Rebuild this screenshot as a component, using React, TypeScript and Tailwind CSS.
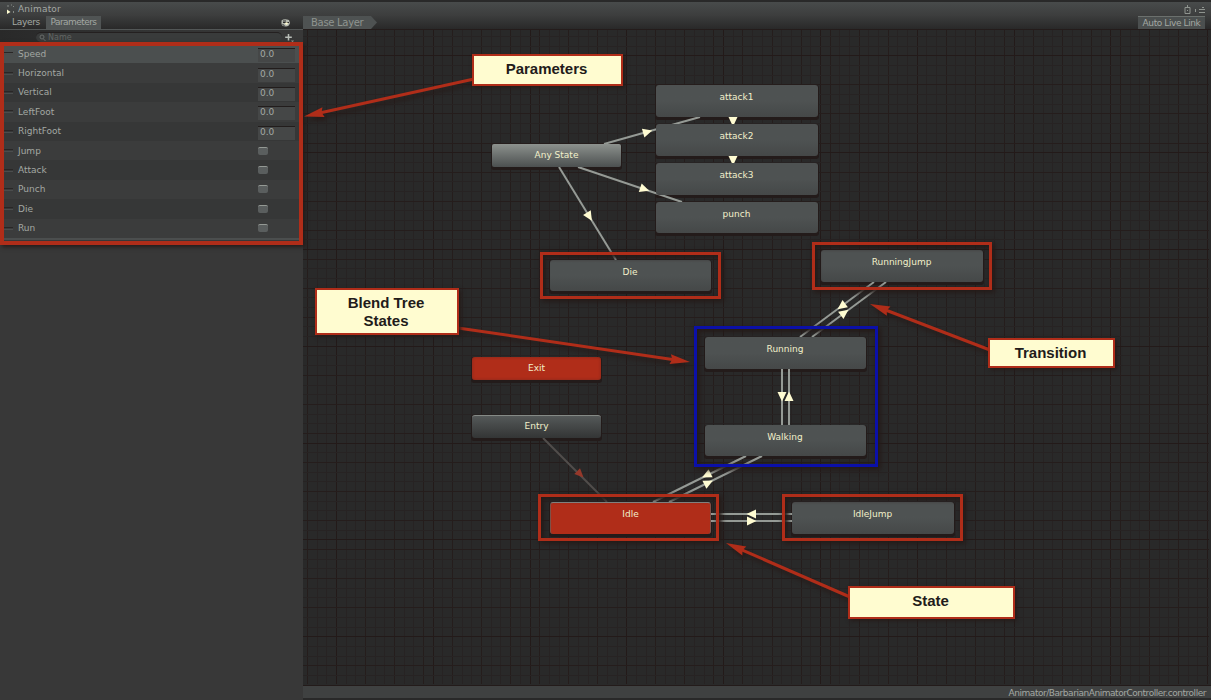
import React from "react";

type NodeKind = "state" | "any" | "exit" | "entry" | "default";

interface StateNode {
  label: string;
  x: number;
  y: number;
  w: number;
  h: number;
  kind: NodeKind;
}

const nodes: StateNode[] = [
  { label: "attack1", x: 656, y: 85, w: 162, h: 32, kind: "state" },
  { label: "attack2", x: 656, y: 124, w: 162, h: 32, kind: "state" },
  { label: "attack3", x: 656, y: 163, w: 162, h: 32, kind: "state" },
  { label: "punch", x: 656, y: 202, w: 162, h: 31, kind: "state" },
  { label: "Any State", x: 492, y: 144, w: 129, h: 23, kind: "any" },
  { label: "Die", x: 550, y: 260, w: 161, h: 31, kind: "state" },
  { label: "RunningJump", x: 821, y: 250, w: 162, h: 32, kind: "state" },
  { label: "Running", x: 705, y: 337, w: 161, h: 32, kind: "state" },
  { label: "Walking", x: 705, y: 425, w: 161, h: 31, kind: "state" },
  { label: "Exit", x: 472, y: 357, w: 129, h: 23, kind: "exit" },
  { label: "Entry", x: 472, y: 415, w: 129, h: 23, kind: "entry" },
  { label: "Idle", x: 550, y: 502, w: 161, h: 32, kind: "default" },
  { label: "IdleJump", x: 792, y: 502, w: 162, h: 32, kind: "state" },
];

const nodeStyles: Record<NodeKind, string> = {
  state: "bg-linear-to-b from-[#4e5252] from-50% to-[#454848] pt-[6px] pr-[1px] rounded-[3px]",
  any: "bg-linear-to-b from-[#8d928e] to-[#4c5050] pt-[5px] rounded-[2px]",
  exit: "bg-[#b02d19] pt-[5px] rounded-[3px] shadow-[inset_0_0_3px_#7c2a1d]",
  entry: "bg-linear-to-b from-[#555959] to-[#333535] border-t border-[#858a86] pt-[4px] rounded-[3px]",
  default: "bg-[#b02d19] border-t border-x border-t-[#8f918d] border-x-[#7d5148] pt-[5px] rounded-[3px]",
};

/* [x1, y1, x2, y2, arrow x, arrow y], running from source to target */
const transitions: number[][] = [
  [604, 144, 700, 117, 647, 132],
  [578, 167, 682, 202, 644, 189],
  [559, 167, 616, 260, 589, 216],
  [733, 117, 733, 124, 733, 121],
  [733, 156, 733, 163, 733, 160],
  [874, 282, 800, 337, 842, 306],
  [812, 337, 886, 282, 844, 313],
  [782, 369, 782, 425, 782, 396],
  [789, 425, 789, 369, 789, 397],
  [746, 456, 653, 502, 707, 475],
  [669, 502, 762, 456, 708, 483],
  [792, 514, 711, 514, 752, 514],
  [711, 521, 792, 521, 751, 521],
];

/* [x1, y1, tip x, tip y] */
const pointers: number[][] = [
  [474, 79, 304, 116.5],
  [458, 328, 690, 362],
  [990, 350, 870, 304],
  [850, 597, 726, 543],
];

const frameShadow = " shadow-[2px_2px_5px_1px_#251b19,inset_2px_2px_4px_1px_#251b19]";

const frames = [
  { x: 0, y: 42, w: 303, h: 203, c: "border-[#b02d19] border-[4px] shadow-[2px_2px_4px_#251b19]" },
  { x: 540, y: 252, w: 181, h: 47, c: "border-[#b02d19] border-[3px]" + frameShadow },
  { x: 812, y: 242, w: 180, h: 48, c: "border-[#b02d19] border-[3px]" + frameShadow },
  { x: 538, y: 494, w: 181, h: 47, c: "border-[#b02d19] border-[3px]" + frameShadow },
  { x: 782, y: 494, w: 181, h: 47, c: "border-[#b02d19] border-[3px]" + frameShadow },
  { x: 694, y: 326, w: 184, h: 141, c: "border-[#0b10a8] border-[3px]" + frameShadow },
];

const callouts = [
  { x: 472, y: 54, w: 151, h: 32, lines: ["Parameters"] },
  { x: 315, y: 288, w: 144, h: 47, lines: ["Blend Tree", "States"] },
  { x: 988, y: 338, w: 127, h: 30, lines: ["Transition"] },
  { x: 848, y: 586, w: 167, h: 33, lines: ["State"] },
];

const parameters = [
  { name: "Speed", value: "0.0" },
  { name: "Horizontal", value: "0.0" },
  { name: "Vertical", value: "0.0" },
  { name: "LeftFoot", value: "0.0" },
  { name: "RightFoot", value: "0.0" },
  { name: "Jump" },
  { name: "Attack" },
  { name: "Punch" },
  { name: "Die" },
  { name: "Run" },
];

function Grid() {
  const lines: React.ReactElement[] = [];
  const step = 9.68;
  const stroke = (i: number) => (i % 10 === 0 ? "#231a19" : i % 3 === 0 ? "#251d1c" : "#272323");
  for (let i = -3; i <= 90; i++) {
    const x = Math.round(336.4 + i * step - 0.5) + 0.5;
    if (x < 305) continue;
    lines.push(<path key={"v" + i} d={`M${x} 30V684`} stroke={stroke(i)} />);
  }
  for (let i = -2; i <= 64; i++) {
    const y = Math.round(55.9 + i * step - 0.5) + 0.5;
    lines.push(<path key={"h" + i} d={`M303 ${y}H1209`} stroke={stroke(i)} />);
  }
  return <g>{lines}</g>;
}

function Transition({ t }: { t: number[] }) {
  const [x1, y1, x2, y2, ax, ay] = t;
  const a = (Math.atan2(y2 - y1, x2 - x1) * 180) / Math.PI;
  return (
    <g>
      <path d={`M${x1} ${y1}L${x2} ${y2}`} stroke="#959a95" strokeWidth="2" />
      <path d="M5.500 0L-4 -4.500V4.500Z" fill="#fffcd2" transform={`translate(${ax} ${ay}) rotate(${a})`} />
    </g>
  );
}

function Pointer({ p }: { p: number[] }) {
  const [x1, y1, x2, y2] = p;
  const a = (Math.atan2(y2 - y1, x2 - x1) * 180) / Math.PI;
  const len = Math.hypot(x2 - x1, y2 - y1);
  return (
    <g transform={`translate(${x1} ${y1}) rotate(${a})`} fill="#b02d19">
      <path d={`M0 -1.5H${len - 16}V1.5H0Z`} />
      <path d={`M${len} 0L${len - 20} -5L${len - 18} 0L${len - 20} 5Z`} />
    </g>
  );
}

function ParameterList() {
  return (
    <div className="ml-[4px] flex flex-col">
      {parameters.map((p, i) => (
        <div
          key={p.name}
          className={
            "flex h-[19.4px] items-center pr-[8px] " +
            (i === 0
              ? "bg-[#4b4f4f]"
              : i % 2 === 0
                ? "bg-[#363737]"
                : "bg-[#3b3c3c]")
          }
        >
          <div className="h-[3px] w-[9px] border-y border-t-[#292626] border-b-[#4b4d4d]" />
          <span className="ml-[5px] flex-1 text-[9px] leading-[12px] text-[#a3a8a3]">{p.name}</span>
          {p.value ? (
            <div className="mt-[3px] flex h-[14px] w-[37px] items-start border-t border-[#221d1c] bg-[#454747] pl-[2px] text-[9px] leading-[11px] text-[#a3a8a3]">
              {p.value}
            </div>
          ) : (
            <div className="flex w-[37px]">
              <div className="h-[8px] w-[10px] rounded-[2px] border-t border-[#949994] bg-[#5a5e5e]" />
            </div>
          )}
        </div>
      ))}
      <div className="h-[2px] bg-[#4b4e4e]" />
    </div>
  );
}

export default function App() {
  return (
    <div className="relative flex h-[700px] w-[1211px] flex-col overflow-hidden bg-[#292929] font-['DejaVu_Sans',sans-serif] text-[9px] text-[#a3a8a3]">
      <header className="flex h-[16px] shrink-0 items-center border-t-2 border-[#292929] bg-linear-to-b from-[#484b4b] to-[#3c3d3d] pr-[4px] pl-[6px]">
        <svg width="11" height="12" viewBox="0 0 11 12">
          <path d="M2 2v2M5 2h1M7.500 3v1M7.500 8v2" stroke="#858a86" fill="none" />
          <path d="M1 6.500l3.500 2.500l-3.500 2z" fill="#fffcd2" />
        </svg>
        <span className="ml-[1px] flex-1 leading-[14px] tracking-[0.2px]">Animator</span>
        <svg width="24" height="12" viewBox="0 0 24 12">
          <path d="M2 4.500h5v6h-5zM4.500 4v-2" stroke="#8f948f" fill="none" />
          <path d="M4 7.500h1M12.500 6v3M16 6.500h6M16 9.500h6M19 4.500h2" stroke="#8f948f" />
        </svg>
      </header>

      <div className="flex min-h-0 flex-1">
        <aside className="flex w-[303px] shrink-0 flex-col bg-[#383838]">
          <div className="flex h-[14px] items-center border-b border-[#525656] bg-linear-to-b from-[#3b3c3c] to-[#292929] pl-[12px]">
            <span className="leading-[13px] tracking-[-0.3px]">Layers</span>
            <span className="ml-[6px] flex h-[13px] w-[55px] items-center justify-center bg-[#505454] leading-[13px] tracking-[-0.55px]">
              Parameters
            </span>
            <svg className="ml-auto mr-[11px]" width="12" height="12" viewBox="0 0 12 12">
              <path d="M1.500 3.500Q4 1.500 9 3L10 6Q9 9.500 6 9.500Q2 9.500 1.500 7Z" fill="#b5b9b0" />
              <path d="M3 5.500h6M3 4h3M2.500 7.500l2 1" stroke="#292929" fill="none" />
              <circle cx="6.500" cy="6.500" r="1.300" fill="#fffcd2" />
            </svg>
          </div>
          <div className="flex h-[14px] shrink-0 items-center bg-linear-to-r from-[#292929] via-[#333434] to-[#383838] pl-[36px]">
            <div className="flex h-[10px] w-[246px] items-center rounded-full border-t border-[#242020] bg-[#393b3b] pl-[3px] text-[8px] leading-[10px] text-[#626664]">
              <svg className="mr-[2px]" width="7" height="8" viewBox="0 0 7 8">
                <circle cx="3" cy="3" r="2" fill="none" stroke="#686c6a" />
                <path d="M4.500 5l2 2" stroke="#686c6a" />
              </svg>
              Name
            </div>
            <svg className="ml-[2px]" width="11" height="11" viewBox="0 0 11 11">
              <path d="M4.500 2v6.500M1.200 5.200h6.600" stroke="#b9beb8" strokeWidth="1.500" />
              <path d="M7 8.500h3l-1.500 2z" fill="#8f948f" />
            </svg>
          </div>
          <ParameterList />
        </aside>

        <main className="flex min-w-0 flex-1 flex-col">
          <div className="flex h-[13px] shrink-0 bg-linear-to-b from-[#3b3c3c] to-[#292929]">
            <div className="flex w-[74px] items-center bg-[#4e5252] pl-[8px] text-[10px] leading-[13px] tracking-[-0.3px] text-[#8f948f] [clip-path:polygon(0_0,68px_0,100%_50%,68px_100%,0_100%)]">
              Base Layer
            </div>
            <div className="mr-[6px] ml-auto flex w-[67px] items-center justify-center border-t border-[#6b706d] bg-[#4b4f4f] leading-[12px] tracking-[-0.4px] whitespace-nowrap">
              Auto Live Link
            </div>
          </div>
          <div className="flex-1 border-t border-[#241c1b]" />
          <footer className="flex h-[15px] shrink-0 items-center justify-end border-t border-b-2 border-t-[#231b1a] border-b-[#292929] bg-[#3f4141] pt-[2px] pr-[5px] leading-[12px] tracking-[-0.46px]">
            Animator/BarbarianAnimatorController.controller
          </footer>
        </main>
      </div>

      <svg className="pointer-events-none absolute inset-0" width="1211" height="700" viewBox="0 0 1211 700">
        <Grid />
        {nodes.map((n) => (
          <rect key={n.label} x={n.x - 1} y={n.y} width={n.w + 2} height={n.h + 3} rx="3" fill="#231b1a" />
        ))}
        {transitions.map((t, i) => (
          <Transition key={i} t={t} />
        ))}
        <path d="M543 438L607 502" stroke="#514d4b" strokeWidth="2" />
        <path d="M5 0L-4 -4V4Z" fill="#96382a" transform="translate(580 474) rotate(45)" />
      </svg>

      {nodes.map((n) => (
        <div
          key={n.label}
          className={"absolute flex justify-center text-[9px] leading-[12px] text-[#f2f0cb] " + nodeStyles[n.kind]}
          style={{ left: n.x, top: n.y, width: n.w, height: n.h }}
        >
          {n.label}
        </div>
      ))}

      {frames.map((f, i) => (
        <div
          key={i}
          className={"absolute " + f.c}
          style={{ left: f.x, top: f.y, width: f.w, height: f.h }}
        />
      ))}

      <svg className="pointer-events-none absolute inset-0 drop-shadow-[2px_4px_2px_#251b19]" width="1211" height="700" viewBox="0 0 1211 700">
        {pointers.map((p, i) => (
          <Pointer key={i} p={p} />
        ))}
      </svg>

      {callouts.map((c) => (
        <div
          key={c.lines[0]}
          className="absolute flex flex-col items-center border-[2px] border-[#b02d19] bg-[#fffcd0] pt-[4px] pr-[2px] font-['Liberation_Sans',sans-serif] text-[15px] leading-[18px] font-bold text-[#221b1a] shadow-[2px_2px_4px_#251b19]"
          style={{ left: c.x, top: c.y, width: c.w, height: c.h }}
        >
          {c.lines.map((l) => (
            <span key={l}>{l}</span>
          ))}
        </div>
      ))}
    </div>
  );
}
